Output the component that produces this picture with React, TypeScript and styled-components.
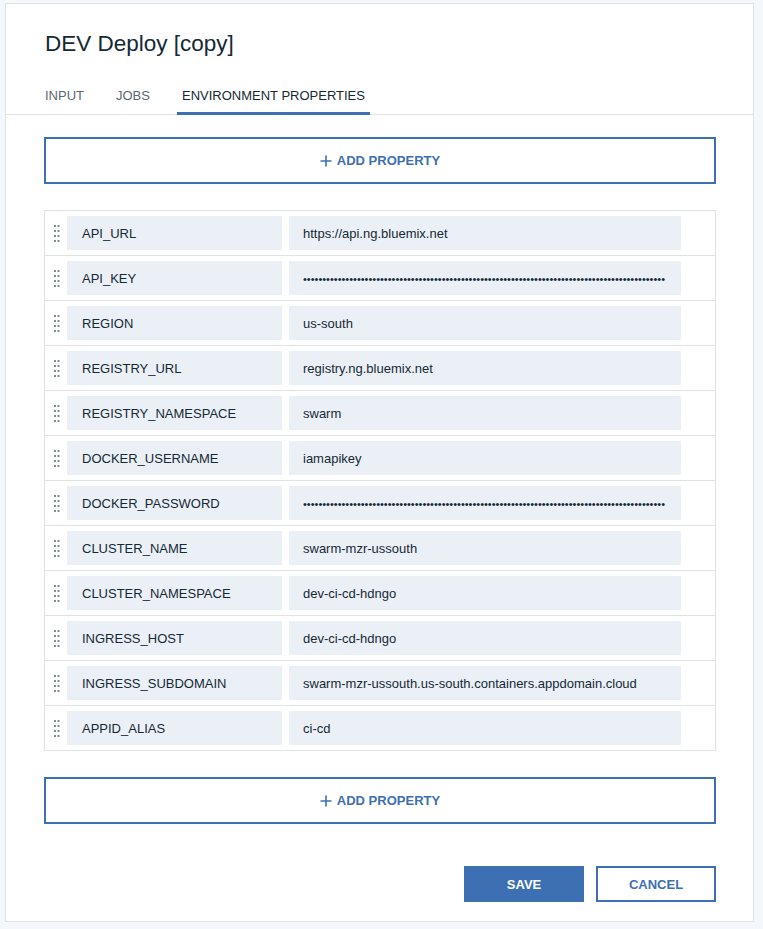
import styled, { createGlobalStyle } from 'styled-components';

const GlobalStyle = createGlobalStyle`
  html, body {
    margin: 0;
    padding: 0;
    background: #f4f7fb;
    font-family: 'Liberation Sans', Arial, sans-serif;
    color: #152935;
  }
`;

const properties: { key: string; value: string; secret?: boolean }[] = [
  { key: 'API_URL', value: 'https://api.ng.bluemix.net' },
  { key: 'API_KEY', value: '', secret: true },
  { key: 'REGION', value: 'us-south' },
  { key: 'REGISTRY_URL', value: 'registry.ng.bluemix.net' },
  { key: 'REGISTRY_NAMESPACE', value: 'swarm' },
  { key: 'DOCKER_USERNAME', value: 'iamapikey' },
  { key: 'DOCKER_PASSWORD', value: '', secret: true },
  { key: 'CLUSTER_NAME', value: 'swarm-mzr-ussouth' },
  { key: 'CLUSTER_NAMESPACE', value: 'dev-ci-cd-hdngo' },
  { key: 'INGRESS_HOST', value: 'dev-ci-cd-hdngo' },
  { key: 'INGRESS_SUBDOMAIN', value: 'swarm-mzr-ussouth.us-south.containers.appdomain.cloud' },
  { key: 'APPID_ALIAS', value: 'ci-cd' },
];

const Page = styled.div`
  padding: 3px 9px 7px 5px;
`;

const Card = styled.div`
  width: 747px;
  height: 917px;
  background: #fff;
  border: 1px solid #dfe3e6;
  display: flex;
  flex-direction: column;
`;

const Header = styled.div`
  padding: 26px 0 0 34px;
  border-bottom: 1px solid #dfe3e6;
`;

const Title = styled.h1`
  margin: 0 0 0 5px;
  font-size: 22.5px;
  line-height: 28px;
  font-weight: 400;
  color: #152935;
`;

const Tabs = styled.div`
  display: flex;
  gap: 22px;
  margin-top: 30px;
`;

const Tab = styled.div<{ $active?: boolean }>`
  padding: 0 5px 8px;
  font-size: 13px;
  line-height: 16px;
  color: ${p => (p.$active ? '#152935' : '#5a6872')};
  border-bottom: 3px solid ${p => (p.$active ? '#3d70b2' : 'transparent')};
  margin-bottom: -1px;
`;

const Body = styled.div`
  padding: 22px 37px 0 38px;
  display: flex;
  flex-direction: column;
`;

const AddButton = styled.button`
  height: 47px;
  width: 100%;
  background: #fff;
  border: 2px solid #3d70b2;
  color: #3d70b2;
  font-family: 'Liberation Sans', Arial, sans-serif;
  font-size: 13px;
  font-weight: 700;
  display: flex;
  align-items: center;
  justify-content: center;
  gap: 5px;
  padding: 0;
`;

const Table = styled.div`
  margin: 26px 0;
  border: 1px solid #dfe3e6;
`;

const Row = styled.div`
  height: 44px;
  display: flex;
  align-items: center;
  & + & {
    border-top: 1px solid #dfe3e6;
  }
`;

const Handle = styled.div`
  width: 22px;
  height: 100%;
  display: flex;
  align-items: center;
  justify-content: center;
  padding-left: 1px;
  box-sizing: border-box;
`;

const Field = styled.div<{ $width: number }>`
  width: ${p => p.$width}px;
  height: 34px;
  background: #ebf0f7;
  display: flex;
  align-items: center;
  padding-left: 14px;
  box-sizing: border-box;
  font-size: 13px;
  color: #152935;
  white-space: nowrap;
  overflow: hidden;
  & + & {
    margin-left: 7px;
  }
`;

const KeyField = styled(Field)`
  padding-left: 15px;
`;

const Secret = styled.span`
  font-size: 11px;
  color: #152935;
  margin-top: 1px;
`;

const Footer = styled.div`
  display: flex;
  justify-content: flex-end;
  gap: 12px;
  margin-top: 42px;
`;

const ActionButton = styled.button<{ $primary?: boolean }>`
  width: 120px;
  height: 36px;
  box-sizing: border-box;
  font-family: 'Liberation Sans', Arial, sans-serif;
  font-size: 13px;
  font-weight: 700;
  border: 2px solid #3d70b2;
  background: ${p => (p.$primary ? '#3d70b2' : '#fff')};
  color: ${p => (p.$primary ? '#fff' : '#3d70b2')};
  padding: 0;
`;

function PlusIcon() {
  return (
    <svg width="12" height="12" viewBox="0 0 12 12">
      <path d="M6 0.5v11M0.5 6h11" stroke="#3d70b2" strokeWidth="1.6" fill="none" />
    </svg>
  );
}

function DragHandle() {
  const dots = [];
  for (let r = 0; r < 4; r++) {
    for (let c = 0; c < 2; c++) {
      dots.push(<rect key={`${r}-${c}`} x={c * 3.5} y={r * 5} width={2} height={2} fill="#7f8c95" />);
    }
  }
  return (
    <svg width="6" height="17" viewBox="0 0 6 17">
      {dots}
    </svg>
  );
}

export default function App() {
  const bullets = '\u2022'.repeat(94);
  return (
    <Page>
      <GlobalStyle />
      <Card>
        <Header>
          <Title>DEV Deploy [copy]</Title>
          <Tabs>
            <Tab>INPUT</Tab>
            <Tab>JOBS</Tab>
            <Tab $active>ENVIRONMENT PROPERTIES</Tab>
          </Tabs>
        </Header>
        <Body>
          <AddButton>
            <PlusIcon />ADD PROPERTY
          </AddButton>
          <Table>
            {properties.map(p => (
              <Row key={p.key}>
                <Handle>
                  <DragHandle />
                </Handle>
                <KeyField $width={215}>{p.key}</KeyField>
                <Field $width={392}>
                  {p.secret ? <Secret>{bullets}</Secret> : p.value}
                </Field>
              </Row>
            ))}
          </Table>
          <AddButton>
            <PlusIcon />ADD PROPERTY
          </AddButton>
          <Footer>
            <ActionButton $primary>SAVE</ActionButton>
            <ActionButton>CANCEL</ActionButton>
          </Footer>
        </Body>
      </Card>
    </Page>
  );
}
